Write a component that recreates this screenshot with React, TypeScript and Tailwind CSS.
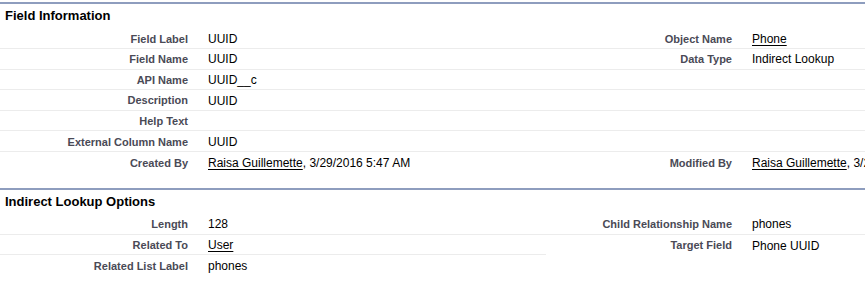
type Cell = { label?: string; value?: React.ReactNode };

type Row = {
  left: Cell;
  right: Cell;
  leftLine: boolean;
  rightLine: boolean;
};

const FONT = "font-['Liberation_Sans',Arial,sans-serif]";

function Link({ children }: { children: React.ReactNode }) {
  return <span className="underline underline-offset-[2px] text-black">{children}</span>;
}

function Half({ cell, line, width }: { cell: Cell; line: boolean; width: string }) {
  return (
    <div className={`flex h-full ${width} ${line ? "border-b border-[#ececec]" : ""}`}>
      <div className="flex w-[198px] shrink-0 items-center justify-end pr-[10px] pt-[1px] text-[11px] font-bold text-[#4a4a56]">
        {cell.label}
      </div>
      <div className="flex flex-1 items-center whitespace-nowrap pl-[10px] pt-[1px] text-[12px] text-black">
        {cell.value}
      </div>
    </div>
  );
}

function DetailRow({ row }: { row: Row }) {
  return (
    <div className="flex h-[20.6px]">
      <Half cell={row.left} line={row.leftLine} width="w-[546px] shrink-0" />
      <Half cell={row.right} line={row.rightLine} width="flex-1 [&>div:first-child]:w-[196px]" />
    </div>
  );
}

function Section({ title, rows, className = "" }: { title: string; rows: Row[]; className?: string }) {
  return (
    <section className={`border-t-2 border-[#8e9dbe] ${className}`}>
      <h3 className="flex h-[24.5px] items-start pl-[5px] pt-[2px] text-[13px] font-bold text-black">
        {title}
      </h3>
      {rows.map((row, i) => (
        <DetailRow key={i} row={row} />
      ))}
    </section>
  );
}

const byLine = (
  <>
    <Link>Raisa Guillemette</Link>, 3/29/2016 5:47 AM
  </>
);

const FIELD_INFO: Row[] = [
  { left: { label: "Field Label", value: "UUID" }, right: { label: "Object Name", value: <Link>Phone</Link> }, leftLine: true, rightLine: true },
  { left: { label: "Field Name", value: "UUID" }, right: { label: "Data Type", value: "Indirect Lookup" }, leftLine: true, rightLine: true },
  { left: { label: "API Name", value: "UUID__c" }, right: {}, leftLine: true, rightLine: true },
  { left: { label: "Description", value: "UUID" }, right: {}, leftLine: true, rightLine: true },
  { left: { label: "Help Text" }, right: {}, leftLine: true, rightLine: true },
  { left: { label: "External Column Name", value: "UUID" }, right: {}, leftLine: true, rightLine: true },
  { left: { label: "Created By", value: byLine }, right: { label: "Modified By", value: byLine }, leftLine: false, rightLine: false },
];

const LOOKUP_OPTIONS: Row[] = [
  { left: { label: "Length", value: "128" }, right: { label: "Child Relationship Name", value: "phones" }, leftLine: true, rightLine: true },
  { left: { label: "Related To", value: <Link>User</Link> }, right: { label: "Target Field", value: "Phone UUID" }, leftLine: true, rightLine: false },
  { left: { label: "Related List Label", value: "phones" }, right: {}, leftLine: false, rightLine: false },
];

export default function App() {
  return (
    <div className={`h-[292px] w-[865px] overflow-hidden bg-white ${FONT}`}>
      <div className="w-[1000px] pt-[2px]">
        <Section title="Field Information" rows={FIELD_INFO} />
        <Section title="Indirect Lookup Options" rows={LOOKUP_OPTIONS} className="mt-[15px]" />
      </div>
    </div>
  );
}
